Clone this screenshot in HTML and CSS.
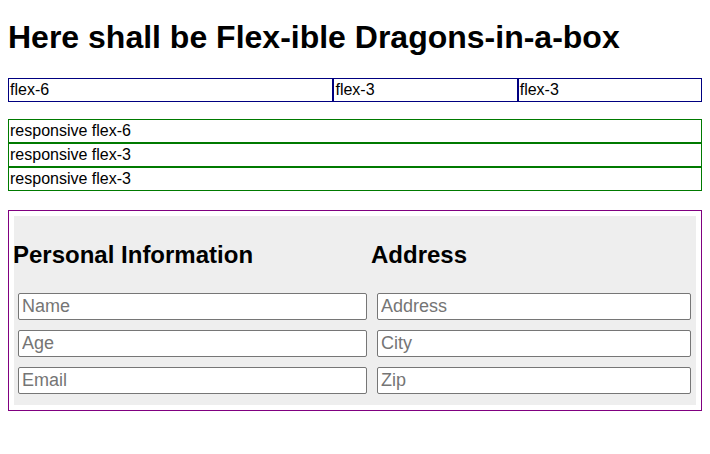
FILE: index.html
```html
<!DOCTYPE html>
<html lang="en">
<head>
<meta charset="utf-8">
<title>Flex-ible Dragons</title>
<link rel="stylesheet" href="styles.css">
</head>
<body>
<h1 class="title">Here shall be Flex-ible Dragons-in-a-box</h1>

<div class="flex-row">
  <div class="cell flex-6">flex-6</div>
  <div class="cell flex-3">flex-3</div>
  <div class="cell flex-3">flex-3</div>
</div>

<div class="resp-row">
  <div class="resp-cell">responsive flex-6</div>
  <div class="resp-cell">responsive flex-3</div>
  <div class="resp-cell">responsive flex-3</div>
</div>

<div class="form-box">
  <div class="form-inner">
    <div class="col col-personal">
      <h2 class="col-title">Personal Information</h2>
      <div class="fields">
        <input class="field" type="text" placeholder="Name">
        <input class="field" type="text" placeholder="Age">
        <input class="field" type="text" placeholder="Email">
      </div>
    </div>
    <div class="col col-address">
      <h2 class="col-title">Address</h2>
      <div class="fields">
        <input class="field" type="text" placeholder="Address">
        <input class="field" type="text" placeholder="City">
        <input class="field" type="text" placeholder="Zip">
      </div>
    </div>
  </div>
</div>
</body>
</html>
```

FILE: styles.css
```css
html, body {
  background: #fff;
}
body {
  margin: 0 8px 8px;
  padding-top: 1px;
  font-family: "Liberation Sans", Arial, Helvetica, sans-serif;
  font-size: 16px;
  color: #000;
}
.title {
  font-size: 32px;
  font-weight: bold;
  margin: 18px 0 22px;
  line-height: 36.8px;
}
.flex-row {
  display: flex;
  margin-bottom: 17px;
}
.cell {
  border: 1px solid #000080;
  padding: 2px 1px;
  line-height: 18px;
}
.flex-6 { flex: 6 1 auto; }
.flex-3 { flex: 3 1 auto; }

.resp-row {
  display: flex;
  flex-direction: column;
  margin-bottom: 19px;
}
.resp-cell {
  border: 1px solid #007a00;
  padding: 2px 1px;
  line-height: 18px;
}

.form-box {
  border: 1px solid #800080;
  padding: 5px;
}
.form-inner {
  display: flex;
  background: #eeeeee;
  padding: 5px 0 11px;
}
.col-personal { flex: 0 0 358px; }
.col-address { flex: 1 1 auto; }
.col-title {
  font-size: 24px;
  font-weight: bold;
  margin: 20px 0 25px -1px;
  line-height: 27.6px;
}
.fields {
  display: flex;
  flex-direction: column;
  gap: 10px;
  margin: 0 5px 0 4px;
}
.col-address .fields {
  margin-left: 5px;
}
.field {
  height: 27px;
  box-sizing: border-box;
  border: 1px solid #767676;
  border-radius: 2px;
  padding: 0 3px;
  font-family: "Liberation Sans", Arial, Helvetica, sans-serif;
  font-size: 18px;
  background: #fff;
  margin: 0;
}
.field::placeholder {
  color: #757575;
}
```
